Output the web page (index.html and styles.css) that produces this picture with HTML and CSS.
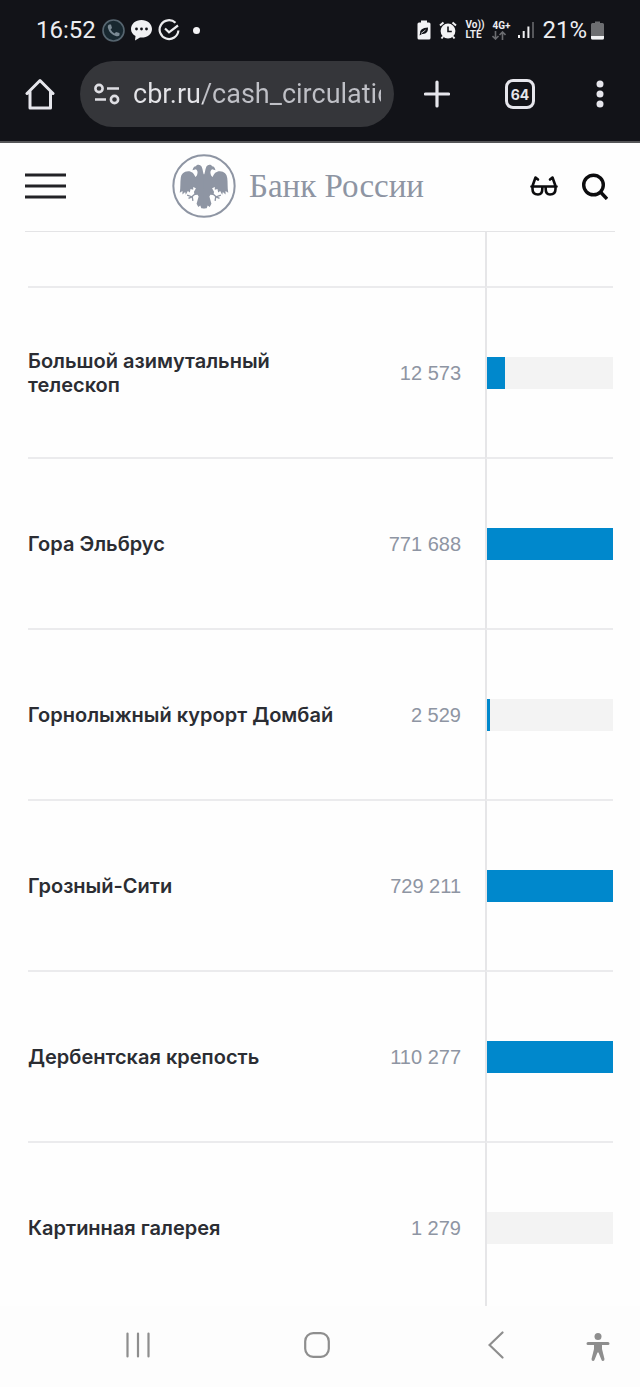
FILE: index.html
```html
<!DOCTYPE html>
<html lang="ru">
<head>
  <meta charset="UTF-8" />
  <meta name="viewport" content="width=device-width, initial-scale=1" />
  <title>Банк России</title>
  <link rel="stylesheet" href="styles.css">
</head>
<body>

<div class="status-bar">
  <div class="status-left">
    <span class="time">16:52</span>
    <svg width="23" height="23" viewBox="0 0 23 23">
      <circle cx="11.5" cy="11.5" r="10.5" fill="#182830" stroke="#56656f" stroke-width="1.6"/>
      <path d="M7 5.5 L9 5.5 L10 9 L8.6 10.4 Q10 13 12.6 14.4 L14 13 L17.5 14 L17.5 16.2 Q16.5 17.6 14.5 17.2 Q7.5 15.5 5.8 8.5 Q5.4 6.5 7 5.5Z" fill="#7b8a94"/>
    </svg>
    <svg width="21" height="22" viewBox="0 0 21 22">
      <path d="M10.5 1 C16.5 1 21 4.900 21 10 C21 15 16.500 18.600 10.500 18.600 L9 18.600 L4 21.500 L4.500 17 C1.700 15.500 0 13 0 10 C0 4.900 4.500 1 10.500 1Z" fill="#f1f1f3"/>
      <g fill="#121318"><circle cx="5.500" cy="10" r="1.400"/><circle cx="10.500" cy="10" r="1.400"/><circle cx="15.500" cy="10" r="1.400"/></g>
    </svg>
    <svg width="23" height="22" viewBox="0 0 23 22" fill="none" stroke="#ececee" stroke-width="2.200">
      <path d="M17.500 3.800 A9.400 9.400 0 1 0 20.400 11.500"/>
      <path d="M7 9.500 L11 13.300 L20 6.500"/>
    </svg>
    <span class="status-dot"></span>
  </div>
  <div class="status-right">
    <svg width="14" height="20" viewBox="0 0 14 20">
      <path d="M4 0.500 H10 V2.500 H12 Q13.500 2.500 13.500 4 V18 Q13.500 19.500 12 19.500 H2 Q0.500 19.500 0.500 18 V4 Q0.500 2.500 2 2.500 H4Z" fill="#f3f3f5"/>
      <path d="M3 13.500 Q2.500 8 11 7.500 Q11.500 14.500 5 14 L2.500 15.500 Z" fill="#121318"/>
      <path d="M4 13.500 L8.500 10" stroke="#f3f3f5" stroke-width="0.800"/>
    </svg>
    <svg width="18" height="19" viewBox="0 0 18 19">
      <circle cx="9" cy="10" r="7.400" fill="#f3f3f5"/>
      <path d="M1 4.500 L4.500 1.500 M17 4.500 L13.500 1.500 M4 15.500 L2.500 17.500 M14 15.500 L15.500 17.500" stroke="#f3f3f5" stroke-width="2"/>
      <path d="M9 5.500 V10.500 H12.800" fill="none" stroke="#121318" stroke-width="1.600"/>
    </svg>
    <span class="net-label">Vo))<br>LTE</span>
    <span class="net-label">4G+
      <svg width="14" height="9" viewBox="0 0 14 9" fill="none" stroke="#6b6c70" stroke-width="1.600">
        <path d="M3.500 0 V8 M0.500 5 L3.500 8 L6.500 5"/>
        <path d="M10.500 9 V1 M7.500 4 L10.500 1 L13.500 4"/>
      </svg>
    </span>
    <svg width="16" height="18" viewBox="0 0 16 18" stroke-width="2">
      <path d="M1 14 V17 M5.700 10 V17 M10.400 5.500 V17" stroke="#f0f0f2"/>
      <path d="M15 1 V17" stroke="#56575b"/>
    </svg>
    <span class="battery">
      <span class="battery-level">21%</span>
      <svg width="13" height="19" viewBox="0 0 13 19">
        <path d="M4 0.500 H9 V2 H11.500 Q13 2 13 3.500 V17 Q13 18.500 11.500 18.500 H1.500 Q0 18.500 0 17 V3.500 Q0 2 1.500 2 H4Z" fill="#6d6e71"/>
        <path d="M0 15 H13 V17 Q13 18.500 11.500 18.500 H1.500 Q0 18.500 0 17Z" fill="#f3f3f5"/>
      </svg>
    </span>
  </div>
</div>

<div class="toolbar">
  <button type="button" class="icon-btn" aria-label="Главная">
    <svg width="30" height="32" viewBox="0 0 30 32" fill="none" stroke="#e6e6ec" stroke-width="3" stroke-linejoin="round" stroke-linecap="round">
      <path d="M2 15.500 L15 2.500 L28 15.500 M5 13.500 V30 H25.500 V13.500"/>
    </svg>
  </button>
  <div class="address">
    <svg width="26" height="22" viewBox="0 0 26 22" fill="none" stroke="#dedee3" stroke-width="2.600">
      <circle cx="5" cy="5.500" r="3.600"/>
      <path d="M13 5.500 H25 M1 16.500 H12"/>
      <circle cx="20.500" cy="16.500" r="3.600"/>
    </svg>
    <input type="text" class="url" aria-label="Адрес" value="cbr.ru/cash_circulation">
  </div>
  <div class="toolbar-actions">
    <button type="button" class="icon-btn" aria-label="Новая вкладка">
      <svg width="26" height="28" viewBox="0 0 26 28" stroke="#e6e6ec" stroke-width="3.200" stroke-linecap="round">
        <path d="M13 2 V26 M1.500 14 H24.500"/>
      </svg>
    </button>
    <button type="button" class="icon-btn tabs-btn">64</button>
    <button type="button" class="icon-btn" aria-label="Меню">
      <svg width="20" height="28" viewBox="0 0 20 28" fill="#e6e6ec">
        <circle cx="10" cy="4" r="3.500"/><circle cx="10" cy="14" r="3.500"/><circle cx="10" cy="24" r="3.500"/>
      </svg>
    </button>
  </div>
</div>

<header class="site-header">
  <button type="button" class="icon-btn" aria-label="Меню сайта">
    <svg width="41" height="26" viewBox="0 0 41 26" stroke="#222226" stroke-width="3">
      <path d="M0 2 H41 M0 13 H41 M0 24 H41"/>
    </svg>
  </button>
  <a href="#" class="logo">
    <svg width="64" height="64" viewBox="33 28 190 190">
      <circle cx="128" cy="123" r="91" fill="none" stroke="#8e95a3" stroke-width="6"/>
      <g id="half" fill="#8e95a3">
        <path d="M129 91 C125 86 125 76 122 68 C119 59 108 58 104 64 C98 64 95 69 94 76 L104 73 C109 76 110 82 108 88 C107 92 105 95 102 96 C99 86 92 79 81 79 C68 79 60 88 59 99 C57 113 59 126 56 143 L64 138 L64 148 L72 141 L74 149 L80 138 L86 142 L88 132 L96 134 L96 126 L104 130 L98 141 L101 150 L109 149 L112 154 L106 176 L111 185 L117 181 L120 189 L129 190 Z"/>
        <path d="M103 145 L92 155 L78 150 M92 155 L82 160 M93 154 L95 167" fill="none" stroke="#8e95a3" stroke-width="4"/>
      </g>
      <use href="#half" transform="translate(256 0) scale(-1 1)"/>
    </svg>
    <span class="logo-text">Банк России</span>
  </a>
  <div class="header-tools">
    <button type="button" class="icon-btn" aria-label="Версия для слабовидящих">
      <svg width="28" height="22" viewBox="0 0 28 22" fill="none" stroke="#0c0c0e" stroke-width="2.600" stroke-linecap="round" stroke-linejoin="round">
        <path d="M1.500 11.500 H26.500 M2.500 11.500 V14 Q2.500 19.500 8 19.500 Q12.300 19.500 12.300 14 V11.500 M15.700 11.500 V14 Q15.700 19.500 20 19.500 Q25.500 19.500 25.500 14 V11.500 M2.500 11 L5.500 2.500 L8 4.500 M25.500 11 L22.500 2.500 L20 4.500"/>
      </svg>
    </button>
    <button type="button" class="icon-btn" aria-label="Поиск">
      <svg width="26" height="27" viewBox="0 0 26 27" fill="none" stroke="#0c0c0e" stroke-width="3.400">
        <circle cx="11.500" cy="12" r="9.800"/>
        <path d="M18.500 19 L25 26"/>
      </svg>
    </button>
  </div>
</header>

<main class="content">
  <table class="coins">
    <tbody>
      <tr class="row-empty"><td class="name"></td><td class="value"></td><td class="chart"></td></tr>
      <tr>
        <th scope="row" class="name">Большой азимутальный телескоп</th>
        <td class="value">12 573</td>
        <td class="chart"><div class="bar"><div class="bar-fill" style="width: 14%"></div></div></td>
      </tr>
      <tr>
        <th scope="row" class="name">Гора Эльбрус</th>
        <td class="value">771 688</td>
        <td class="chart"><div class="bar"><div class="bar-fill" style="width: 100%"></div></div></td>
      </tr>
      <tr>
        <th scope="row" class="name">Горнолыжный курорт Домбай</th>
        <td class="value">2 529</td>
        <td class="chart"><div class="bar"><div class="bar-fill" style="width: 2%"></div></div></td>
      </tr>
      <tr>
        <th scope="row" class="name">Грозный-Сити</th>
        <td class="value">729 211</td>
        <td class="chart"><div class="bar"><div class="bar-fill" style="width: 100%"></div></div></td>
      </tr>
      <tr>
        <th scope="row" class="name">Дербентская крепость</th>
        <td class="value">110 277</td>
        <td class="chart"><div class="bar"><div class="bar-fill" style="width: 100%"></div></div></td>
      </tr>
      <tr>
        <th scope="row" class="name">Картинная галерея</th>
        <td class="value">1 279</td>
        <td class="chart"><div class="bar"><div class="bar-fill" style="width: 0%"></div></div></td>
      </tr>
    </tbody>
  </table>
</main>

<nav class="system-nav">
  <button type="button" class="icon-btn" aria-label="Недавние">
    <svg width="26" height="26" viewBox="0 0 26 26" stroke="#8e8e8e" stroke-width="2.200" stroke-linecap="round">
      <path d="M2.500 1.500 V24.500 M13 1.500 V24.500 M23.500 1.500 V24.500"/>
    </svg>
  </button>
  <button type="button" class="icon-btn" aria-label="Домой">
    <svg width="26" height="26" viewBox="0 0 26 26" fill="none" stroke="#8e8e8e" stroke-width="2.200">
      <rect x="1.200" y="1.200" width="23.600" height="23.600" rx="8"/>
    </svg>
  </button>
  <button type="button" class="icon-btn" aria-label="Назад">
    <svg width="16" height="28" viewBox="0 0 16 28" fill="none" stroke="#8e8e8e" stroke-width="2.200" stroke-linecap="round">
      <path d="M14.500 1.500 L1.500 14 L14.500 26.500"/>
    </svg>
  </button>
  <button type="button" class="icon-btn access-btn" aria-label="Специальные возможности">
    <svg width="24" height="30" viewBox="0 0 24 30" fill="#8e8e8e">
      <circle cx="12" cy="4.500" r="3.500"/>
      <path d="M2 10 H22 Q23.500 10 23.500 11.500 Q23.500 13 22 13 H16 V17 L18.500 27 Q18.500 29 17 29 Q15.800 29 15.300 27.500 L12.500 20.500 H11.500 L8.700 27.500 Q8.200 29 7 29 Q5.500 29 5.500 27 L8 17 V13 H2 Q0.500 13 0.500 11.500 Q0.500 10 2 10Z"/>
    </svg>
  </button>
</nav>

</body>
</html>
```

FILE: styles.css
```css
* {
  box-sizing: border-box;
}
body {
  font-family: Inter, sans-serif;
  background-color: #fefefe;
  margin: 0;
  display: flex;
  flex-direction: column;
  height: 100vh;
}
svg {
  display: block;
  flex: none;
}
.icon-btn {
  display: flex;
  align-items: center;
  justify-content: center;
  padding: 0;
  border: none;
  background: none;
  cursor: pointer;
}

/* phone status bar */
.status-bar {
  display: flex;
  justify-content: space-between;
  height: 60px;
  flex: none;
  padding: 0 36px;
  background-color: #121318;
  color: #ededf0;
  font-family: Roboto, sans-serif;
}
.status-left, .status-right {
  display: flex;
  align-items: center;
  gap: 6px;
}
.status-right {
  gap: 8px;
}
.time, .battery-level {
  font-size: 24px;
  line-height: 28px;
}
.battery {
  display: flex;
  align-items: center;
  gap: 4px;
}
.status-dot {
  width: 7px;
  height: 7px;
  margin-left: 6px;
  border-radius: 50%;
  background-color: #f3f3f5;
}
.net-label {
  font-size: 10px;
  line-height: 10px;
  font-weight: 700;
}

/* browser toolbar */
.toolbar {
  display: flex;
  align-items: center;
  flex: none;
  padding: 1px 30px 14px 25px;
  background-color: #121318;
  border-bottom: 2px solid #555658;
}
.address {
  flex: 1;
  min-width: 0;
  display: flex;
  align-items: center;
  gap: 13px;
  height: 66px;
  margin: 0 30px 0 25px;
  padding: 0 13px 0 14px;
  border-radius: 33px;
  background-color: #35363a;
}
.url {
  flex: 1;
  min-width: 0;
  padding: 0;
  border: none;
  outline: none;
  font-family: Roboto, sans-serif;
  font-size: 27px;
  line-height: 32px;
  color: transparent;
  background: linear-gradient(to right, #e4e4e8 70px, #bfc0c6 70px);
  -webkit-background-clip: text;
  background-clip: text;
}
.toolbar-actions {
  display: flex;
  align-items: center;
  gap: 55px;
}
.tabs-btn {
  width: 30px;
  height: 30px;
  border: 3px solid #e6e6ec;
  border-radius: 8px;
  color: #e6e6ec;
  font-family: Inter, sans-serif;
  font-size: 14px;
  font-weight: 700;
}

/* site header */
.site-header {
  display: flex;
  align-items: center;
  justify-content: space-between;
  flex: none;
  margin: 0 25px;
  padding: 11px 7px 13px 0;
  border-bottom: 1px solid #e4e4e6;
}
.logo {
  display: flex;
  align-items: center;
  gap: 13px;
  color: #8e95a3;
  text-decoration: none;
}
.logo-text {
  font-family: "Liberation Serif", serif;
  font-size: 33px;
  line-height: 40px;
  white-space: nowrap;
}
.header-tools {
  display: flex;
  align-items: center;
  gap: 24px;
}

/* coins table */
.content {
  flex: 1;
  min-height: 0;
  overflow: hidden;
  padding: 0 27px 0 28px;
}
.coins {
  width: 100%;
  table-layout: fixed;
  border-collapse: separate;
  border-spacing: 0;
}
.coins tr {
  height: 171px;
}
.coins .row-empty {
  height: 56px;
}
.coins th, .coins td {
  padding: 0;
  border-bottom: 2px solid #ebebed;
  vertical-align: middle;
}
.coins .name {
  width: 54%;
  text-align: left;
  font-size: 20px;
  line-height: 24px;
  font-weight: 600;
  color: #2b2d33;
}
.coins .value {
  padding-right: 24px;
  text-align: right;
  font-family: "Liberation Sans", sans-serif;
  font-size: 20px;
  line-height: 24px;
  color: #8e95a3;
}
.coins .chart {
  width: 128px;
  border-left: 2px solid #e6e6e8;
}
.bar {
  height: 32px;
  background-color: #f3f3f3;
}
.bar-fill {
  height: 100%;
  background-color: #0088cc;
}

/* system navigation */
.system-nav {
  display: grid;
  grid-template-columns: 7fr 7fr 7fr 1fr;
  flex: none;
  height: 81px;
  padding: 0 29px 3px 48px;
  background-color: #fdfdfd;
}
.access-btn {
  padding-top: 4px;
}
```
